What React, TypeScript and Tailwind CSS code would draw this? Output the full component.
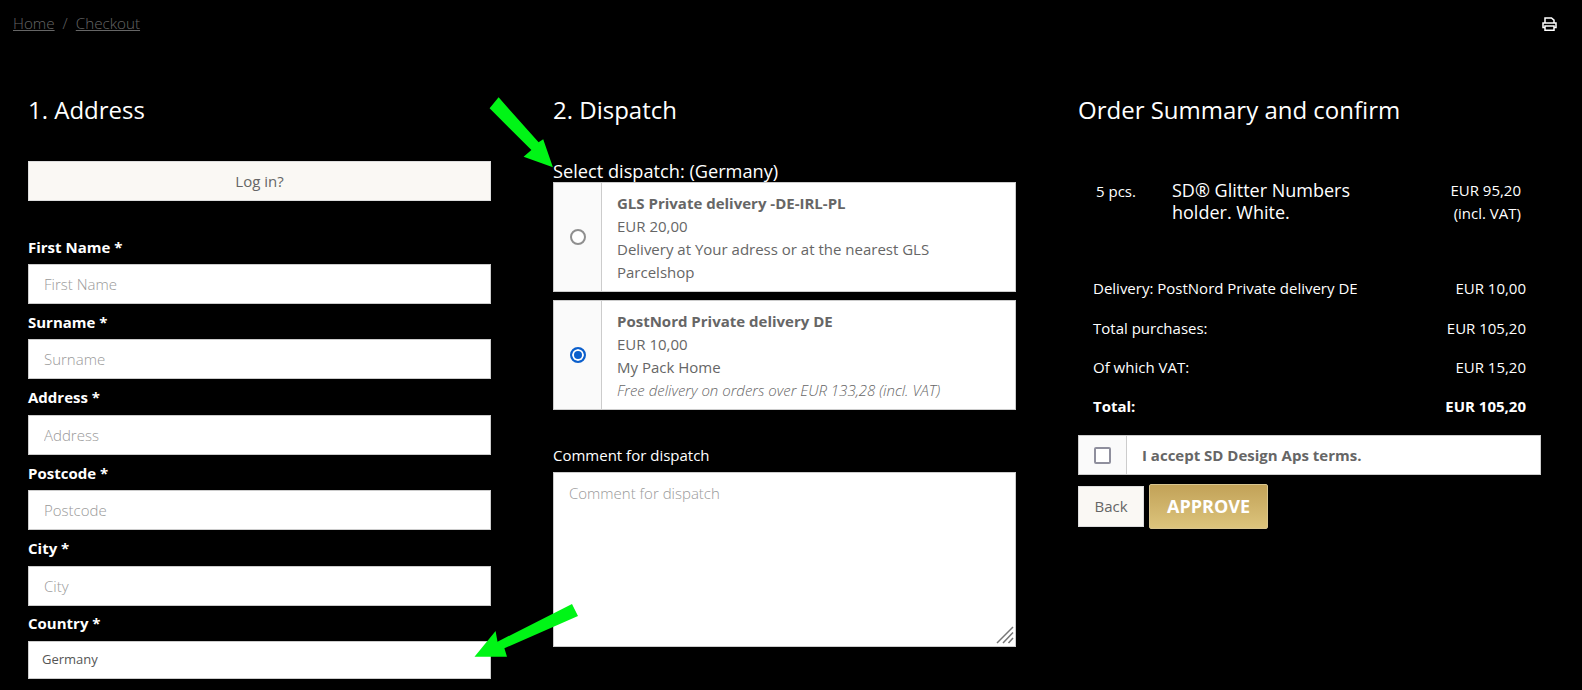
const font = { fontFamily: '"Open Sans", sans-serif' };

const fields = ['First Name', 'Surname', 'Address', 'Postcode', 'City'];

function Label({ text }: { text: string }) {
  return <div className="flex h-[35.4px] items-center pt-[1px] text-[15px] font-bold text-white">{text} *</div>;
}

function PrintIcon() {
  return (
    <svg width="15" height="14" viewBox="0 0 15 14" fill="none" stroke="#fff" strokeWidth="1.5">
      <path d="M3 6V1h6.5L12 3.2V6" />
      <path d="M3 10.5H1V6h13v4.5h-2" fill="none" />
      <path d="M3 9h9v4.3H3z" />
    </svg>
  );
}

function Row({ label, value, bold }: { label: string; value: string; bold?: boolean }) {
  return (
    <div className={`flex h-[39.3px] items-center justify-between text-[15px] text-white ${bold ? 'font-bold' : ''}`}>
      <span>{label}</span>
      <span>{value}</span>
    </div>
  );
}

function Option({ checked, title, lines, note }: { checked: boolean; title: string; lines: string[]; note?: string }) {
  return (
    <div className="flex h-[110px] border border-[#ccc] bg-white text-[15px] leading-[23px] text-[#666]">
      <div className="flex w-[48px] shrink-0 items-center justify-center border-r border-[#ccc] bg-[#fafafa]">
        <input
          type="radio"
          name="dispatch"
          defaultChecked={checked}
          className="h-4 w-4 appearance-none rounded-full border-2 border-[#8f8f8f] bg-white checked:border-[#0b5fcc] checked:bg-[#0b5fcc] checked:shadow-[inset_0_0_0_2px_white]"
        />
      </div>
      <div className="pl-[15px] pr-[50px] pt-[9px]">
        <div className="font-bold">{title}</div>
        {lines.map((l) => <div key={l}>{l}</div>)}
        {note && <div className="italic font-light">{note}</div>}
      </div>
    </div>
  );
}

export default function App() {
  return (
    <div className="relative h-[690px] overflow-hidden bg-black" style={font}>
      <div className="flex h-[47px] items-center justify-between pl-[13px] pr-[25px] text-[15.2px] font-light text-[#666]">
        <div>
          <a href="#" className="underline">Home</a>
          <span className="mx-2">/</span>
          <a href="#" className="underline">Checkout</a>
        </div>
        <PrintIcon />
      </div>

      <div className="flex pl-[28px] pt-[45px]">
        {/* address */}
        <div className="w-[525px] pr-[62px]">
          <h2 className="text-[24px] leading-[36px] text-white">1. Address</h2>
          <button type="button" className="mt-[33px] h-10 w-full border border-[#ddd] bg-[#faf8f4] text-[15px] text-[#666]">
            Log in?
          </button>
          <div className="mt-[27.6px]">
            {fields.map((f) => (
              <div key={f}>
                <Label text={f} />
                <input placeholder={f} className="h-10 w-full border border-[#ccc] bg-white pl-[15px] text-[15px] font-light text-[#555] outline-none placeholder:text-[#999]" />
              </div>
            ))}
            <Label text="Country" />
            <select className="h-[38px] w-full appearance-none border border-[#ccc] bg-white pl-[13px] text-[13px] text-[#555] outline-none">
              <option>Germany</option>
            </select>
          </div>
        </div>

        {/* dispatch */}
        <div className="w-[525px] pr-[62px]">
          <h2 className="text-[24px] leading-[36px] text-white">2. Dispatch</h2>
          <div className="mt-[33px] text-[18.2px] leading-[21px] text-white">Select dispatch: (Germany)</div>
          <Option
            checked={false}
            title="GLS Private delivery -DE-IRL-PL"
            lines={['EUR 20,00', 'Delivery at Your adress or at the nearest GLS Parcelshop']}
          />
          <div className="h-[8px]" />
          <Option
            checked
            title="PostNord Private delivery DE"
            lines={['EUR 10,00', 'My Pack Home']}
            note="Free delivery on orders over EUR 133,28 (incl. VAT)"
          />
          <div className="mt-[34px] text-[15px] leading-[22px] text-white">Comment for dispatch</div>
          <div className="relative mt-[6px]">
            <textarea
              placeholder="Comment for dispatch"
              className="block h-[175px] w-full resize-none border border-[#ccc] bg-white px-[15px] py-[9px] text-[15px] font-light outline-none placeholder:text-[#999]"
            />
            <svg className="absolute bottom-[3px] right-[2px]" width="18" height="18" stroke="#777" strokeWidth="1.5">
              <path d="M1 17 17 1M7 17 17 6.5M12.5 17 17 12" />
            </svg>
          </div>
        </div>

        {/* summary */}
        <div className="w-[463px]">
          <h2 className="text-[24px] leading-[36px] text-white">Order Summary and confirm</h2>
          <div className="mt-[51px] flex pl-[18px] pr-[20px] text-white">
            <div className="w-[76px] pt-[1px] text-[15px] leading-[22px]">5 pcs.</div>
            <div className="w-[190px] text-[18px] leading-[22px]">SD® Glitter Numbers holder. White.</div>
            <div className="flex-1 text-right text-[15px] leading-[23px]">
              EUR 95,20<br />(incl. VAT)
            </div>
          </div>
          <div className="mt-[44px] pl-[15px] pr-[15px]">
            <Row label="Delivery: PostNord Private delivery DE" value="EUR 10,00" />
            <Row label="Total purchases:" value="EUR 105,20" />
            <Row label="Of which VAT:" value="EUR 15,20" />
            <Row label="Total:" value="EUR 105,20" bold />
          </div>
          <div className="mt-[9px] flex h-10 border border-[#ccc] bg-white">
            <div className="flex w-[48px] shrink-0 items-center justify-center border-r border-[#ccc] bg-[#fafafa]">
              <input type="checkbox" className="h-[17px] w-[17px] appearance-none rounded-[2px] border-2 border-[#8f8f9d] bg-white" />
            </div>
            <div className="flex items-center pl-[15px] text-[15px] font-bold text-[#666]">I accept SD Design Aps terms.</div>
          </div>
          <div className="mt-[9px] flex items-start gap-[5px]">
            <button type="button" className="mt-[2px] h-[41px] w-[66px] border border-[#ddd] bg-[#faf8f4] text-[15px] text-[#666]">Back</button>
            <button type="button" className="h-[45px] w-[119px] rounded-[2px] border border-[#d8c58f] bg-gradient-to-b from-[#c2a258] to-[#dcc47c] text-[18px] font-bold text-white">APPROVE</button>
          </div>
        </div>
      </div>

      {/* green annotation arrows */}
      <svg className="absolute left-0 top-0" width="1582" height="690" fill="#00f516">
        <polygon points="489.6,108.3 498.6,97.3 538.6,142.3 543.2,139.3 552.9,167.3 523.6,156.7 531.4,150" />
        <polygon points="474.5,656.7 495.6,631 497.5,641.7 572,604 578,616 504.4,648.3 507,656.7" />
      </svg>
    </div>
  );
}
